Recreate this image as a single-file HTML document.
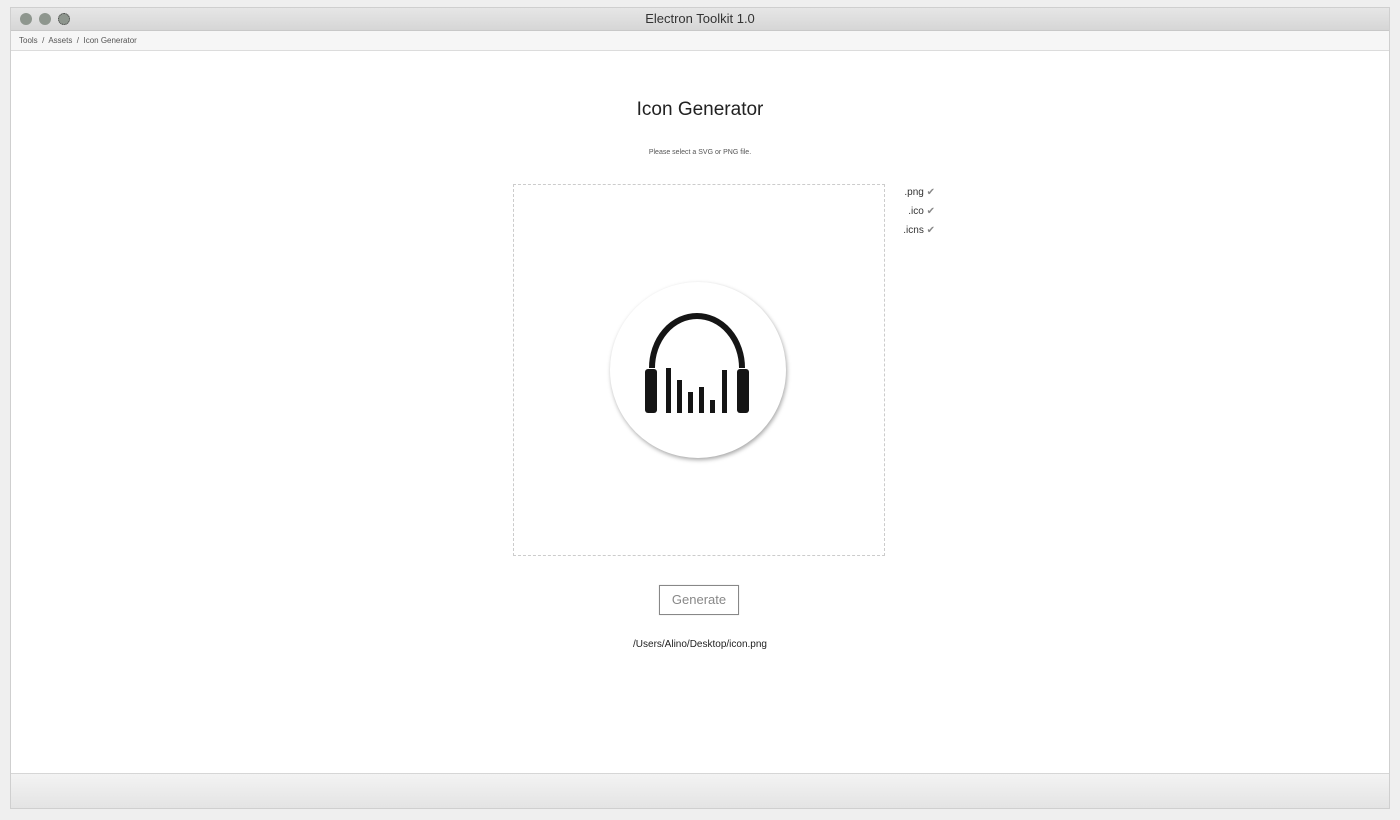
<!DOCTYPE html>
<html><head><style>
*{margin:0;padding:0;box-sizing:border-box}
body{width:1400px;height:820px;background:#efefef;font-family:"Liberation Sans",sans-serif;position:relative;overflow:hidden}
.win{position:absolute;left:10px;top:7px;width:1380px;height:802px;border:1px solid #cfcfcf;background:#fff}
.title{position:absolute;left:0;top:0;width:100%;height:23px;background:linear-gradient(#e6e6e6,#d6d6d6);border-bottom:1px solid #c8c8c8;text-align:center;font-size:13px;line-height:22px;color:#333}
.dot{position:absolute;top:5px;width:12px;height:12px;border-radius:50%;background:#8e968e}
.crumb{position:absolute;left:0;top:23px;width:100%;height:20px;background:#f6f6f6;border-bottom:1px solid #dcdcdc;font-size:8px;line-height:19px;padding-left:8px;color:#555}
.foot{position:absolute;left:0;top:765px;width:100%;height:35px;background:linear-gradient(#f3f3f3,#e4e4e4);border-top:1px solid #d6d6d6}
.abs{position:absolute}
</style></head><body>
<div class="win">
 <div class="title"><div class="dot" style="left:9px"></div><div class="dot" style="left:28px"></div><div class="dot" style="left:47px;border:1px dotted #444"></div>Electron Toolkit 1.0</div>
 <div class="crumb">Tools &nbsp;/&nbsp; Assets &nbsp;/&nbsp; Icon Generator</div>
 <div class="foot"></div>
</div>
<div class="abs" style="left:0;width:1400px;top:99px;text-align:center;font-size:19px;color:#222">Icon Generator</div>
<div class="abs" style="left:0;width:1400px;top:149px;text-align:center;font-size:7px;color:#555">Please select a SVG or PNG file.</div>
<div class="abs" style="left:513px;top:184px;width:372px;height:372px;border:1px dashed #ccc"></div>
<div class="abs" style="left:610px;top:282px;width:176px;height:176px;border-radius:50%;background:#fff;box-shadow:1px 2px 4px rgba(0,0,0,.35)"></div>
<svg class="abs" style="left:0;top:0" width="1400" height="820">
<path d="M652 368 A45 52 0 0 1 742 368" fill="none" stroke="#151515" stroke-width="6"/>
<g fill="#151515">
<rect x="645" y="369" width="12" height="44" rx="3"/>
<rect x="737" y="369" width="12" height="44" rx="3"/>
<rect x="666" y="368" width="5" height="45"/>
<rect x="677" y="380" width="5" height="33"/>
<rect x="688" y="392" width="5" height="21"/>
<rect x="699" y="387" width="5" height="26"/>
<rect x="710" y="400" width="5" height="13"/>
<rect x="722" y="370" width="5" height="43"/>
</g>
</svg>
<div class="abs" style="left:895px;top:183px;width:40px;text-align:right;font-size:10px;color:#333;line-height:19px">.png <span style="color:#888">✔</span><br>.ico <span style="color:#888">✔</span><br>.icns <span style="color:#888">✔</span></div>
<div class="abs" style="left:659px;top:585px;width:80px;height:30px;border:1px solid #888;font-size:13px;color:#888;text-align:center;line-height:28px;box-shadow:0 0 1px #ccc">Generate</div>
<div class="abs" style="left:0;width:1400px;top:639px;text-align:center;font-size:10px;color:#222">/Users/Alino/Desktop/icon.png</div>
</body></html>
